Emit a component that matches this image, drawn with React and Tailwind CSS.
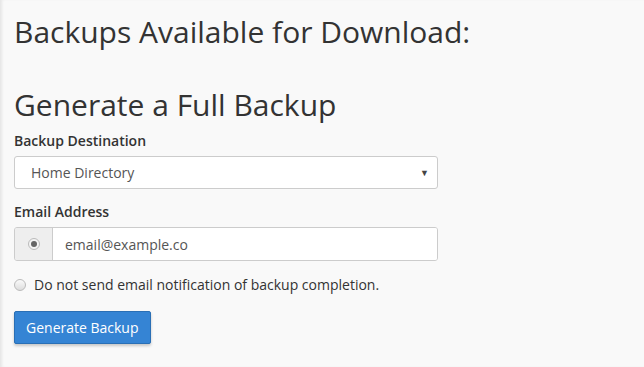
import React from "react";

const App = () => {
  return (
    <div
      className="w-[644px] h-[367px] overflow-hidden bg-[#f9f9f9] text-[#333] shadow-[inset_3px_0_3px_-1px_rgba(0,0,0,0.08)]"
      style={{ fontFamily: '"Open Sans", Arial, sans-serif' }}
    >
      <div className="pl-[14px] pt-[14px] w-[438px]">
        <h1 className="text-[30px] leading-[36px] whitespace-nowrap text-[#333]">
          Backups Available for Download:
        </h1>

        <h2 className="mt-[37px] text-[30px] leading-[36px] text-[#333]">
          Generate a Full Backup
        </h2>

        <div className="mt-[8px]">
          <label className="block text-[14px] leading-[20px] font-semibold text-[#333]">
            Backup Destination
          </label>
          <div className="mt-[5px] flex items-center justify-between h-[33px] bg-white border border-[#ccc] rounded-[3px] pl-[16px] pr-[8px]">
            <span className="text-[14px] text-[#555]">Home Directory</span>
            <span className="text-[9px] text-[#444]">▼</span>
          </div>
        </div>

        <div className="mt-[13px]">
          <label className="block text-[14px] leading-[20px] font-semibold text-[#333]">
            Email Address
          </label>
          <div className="mt-[5px] flex h-[34px] border border-[#ccc] rounded-[3px] overflow-hidden">
            <div className="w-[38px] bg-[#eee] border-r border-[#ccc] flex items-center justify-center">
              <span className="w-[12px] h-[12px] rounded-full border border-[#bbb] bg-[#f4f4f4] flex items-center justify-center">
                <span className="w-[6px] h-[6px] rounded-full bg-[#666]" />
              </span>
            </div>
            <div className="flex-1 bg-white flex items-center pl-[12px] text-[14px] text-[#555]">
              email@example.co
            </div>
          </div>
        </div>

        <div className="mt-[14px] flex items-center gap-[8px]">
          <span className="w-[12px] h-[12px] rounded-full border border-[#bbb] bg-[linear-gradient(#fafafa,#ddd)]" />
          <span className="text-[14px] leading-[20px] text-[#333] whitespace-nowrap">
            Do not send email notification of backup completion.
          </span>
        </div>

        <button className="mt-[16px] h-[33px] px-[11px] bg-[#3584d4] border border-[#2a6fb5] rounded-[2px] text-white text-[14px] shadow-[0_2px_3px_rgba(0,0,0,0.2)]">
          Generate Backup
        </button>
      </div>
    </div>
  );
};

export default App;
